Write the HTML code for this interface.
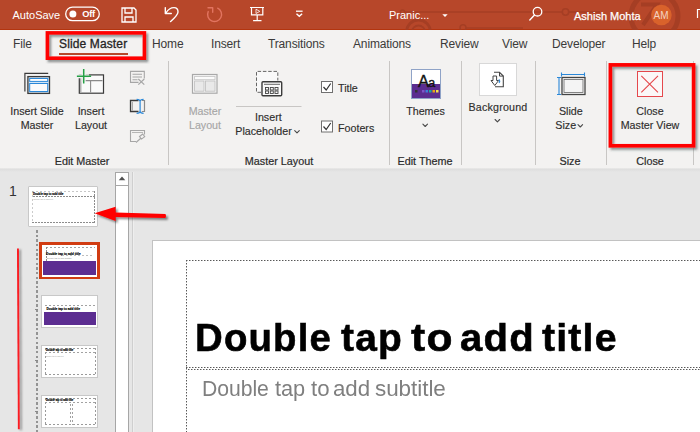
<!DOCTYPE html>
<html>
<head>
<meta charset="utf-8">
<title>Slide Master</title>
<style>
html,body{margin:0;padding:0;}
body{width:700px;height:432px;overflow:hidden;position:relative;background:#e6e6e6;font-family:"Liberation Sans",sans-serif;font-size:12px;color:#333;}
.abs{position:absolute;}
#titlebar{left:0;top:0;width:700px;height:30px;background:#b7472a;box-shadow:inset 0 -1px 0 #b3350f;}
#titlebar .t{position:absolute;z-index:2;color:#fff;font-size:11px;white-space:nowrap;line-height:14px;}
#tabs{left:0;top:30px;width:700px;height:29px;background:#f3f2f1;}
#tabs .t{position:absolute;top:7px;font-size:12px;letter-spacing:-0.15px;color:#3b3a39;white-space:nowrap;line-height:14px;}
#ribbon{left:0;top:59px;width:700px;height:110px;background:#f3f2f1;}
#ribbon .t{position:absolute;font-size:10.7px;letter-spacing:0;color:#2f2e2d;-webkit-text-stroke:0.150px #2f2e2d;white-space:nowrap;line-height:14px;text-align:center;transform:translateX(-50%);}
#ribbon .g{position:absolute;font-size:10.800px;color:#2b2b2b;-webkit-text-stroke:0.200px #2b2b2b;white-space:nowrap;line-height:14px;text-align:center;transform:translateX(-50%);top:95px;}
#ribbon .dis{color:#a6a6a6;-webkit-text-stroke:0.150px #a6a6a6;}
#ribbon .sep{position:absolute;top:2px;width:1px;height:104px;background:#c8c6c4;}
#shadow{left:0;top:168px;width:700px;height:4px;background:linear-gradient(#f3f2f1 0,#dddddd 22%,#e6e6e6 100%);z-index:1;}
#panel{left:0;top:169px;width:131px;height:263px;}
#main{left:131px;top:169px;width:569px;height:263px;}
.thumb{position:absolute;background:#fff;border:1px solid #c8c8c8;box-sizing:border-box;}
.tiny{font-size:3.2px;font-weight:bold;color:#000;-webkit-text-stroke:0.150px #000;white-space:nowrap;line-height:4px;}
.redbox{border:3px solid #f2050b;box-shadow:2px 2px 3px rgba(0,0,0,.55), inset 2px 2px 3px rgba(0,0,0,.45);}
.dot{box-sizing:border-box;}
.hd{height:1px;background:repeating-linear-gradient(to right,#585858 0,#585858 1px,#b0b0b0 1px,#b0b0b0 2px,transparent 2px,transparent 3px);}
.vd{width:1px;background:repeating-linear-gradient(to bottom,#585858 0,#585858 1px,#b0b0b0 1px,#b0b0b0 2px,transparent 2px,transparent 3px);}
.dh{height:1px;background:repeating-linear-gradient(to right,#a2a2a2 0,#a2a2a2 2px,transparent 2px,transparent 4px);}
.dv{width:1px;background:repeating-linear-gradient(to bottom,#a2a2a2 0,#a2a2a2 2px,transparent 2px,transparent 4px);}
.dbox{box-sizing:border-box;background:
 repeating-linear-gradient(to right,#9a9a9a 0,#9a9a9a 2px,transparent 2px,transparent 4px) top left/100% 1px no-repeat,
 repeating-linear-gradient(to right,#9a9a9a 0,#9a9a9a 2px,transparent 2px,transparent 4px) bottom left/100% 1px no-repeat,
 repeating-linear-gradient(to bottom,#9a9a9a 0,#9a9a9a 2px,transparent 2px,transparent 4px) top left/1px 100% no-repeat,
 repeating-linear-gradient(to bottom,#9a9a9a 0,#9a9a9a 2px,transparent 2px,transparent 4px) top right/1px 100% no-repeat;}
.dbox.nb{background:
 repeating-linear-gradient(to right,#9a9a9a 0,#9a9a9a 2px,transparent 2px,transparent 4px) top left/100% 1px no-repeat,
 repeating-linear-gradient(to bottom,#9a9a9a 0,#9a9a9a 2px,transparent 2px,transparent 4px) top left/1px 100% no-repeat,
 repeating-linear-gradient(to bottom,#9a9a9a 0,#9a9a9a 2px,transparent 2px,transparent 4px) top right/1px 100% no-repeat;}
.tw{top:75px;font-size:38px;font-weight:bold;-webkit-text-stroke:0.550px #000;letter-spacing:1.150px;line-height:44px;color:#000;white-space:nowrap;transform-origin:0 0;}
.sw{top:135.700px;font-size:21.500px;letter-spacing:-0.050px;line-height:24px;color:#7f7f7f;white-space:nowrap;transform-origin:0 0;}
.dh.dk{background:repeating-linear-gradient(to right,#8c8c8c 0,#8c8c8c 2px,transparent 2px,transparent 3px);}
.dv.dk{background:repeating-linear-gradient(to bottom,#8c8c8c 0,#8c8c8c 2px,transparent 2px,transparent 3px);}
</style>
</head>
<body>
<div id="titlebar" class="abs">
  <span class="t" style="left:12.500px;top:7.500px;">AutoSave</span>
  <svg class="abs" style="left:60px;top:0" width="50" height="30" viewBox="60 0 50 30">
    <rect x="65.700" y="7.100" width="33.600" height="13.600" rx="6.800" fill="none" stroke="#fff" stroke-width="1.300"/>
    <circle cx="72.900" cy="13.900" r="3.500" fill="#fff"/>
    <text x="82.300" y="17.100" font-family="Liberation Sans, sans-serif" font-size="9.300" font-weight="bold" fill="#fff" letter-spacing="-0.300">Off</text>
  </svg>
  <svg class="abs" style="left:119px;top:5px" width="20" height="20" viewBox="0 0 20 20" fill="none" stroke="#fff" stroke-width="1.3">
    <path d="M3 3h12l2 2v12H3z"/><path d="M6 3v5h7V3"/><path d="M6 17v-5h8v5"/>
  </svg>
  <svg class="abs" style="left:155px;top:0" width="80" height="30" viewBox="155 0 80 30" fill="none" stroke-linecap="round" stroke-linejoin="round">
    <path d="M165.300 7.600V13.500H171.300M165.900 13C168 9.500 171 7.600 174 7.600C176.500 7.600 178 9.500 178 12C178 15 174 18.500 170.500 21.600" stroke="#fff" stroke-width="1.400"/>
    <path d="M217.700 8.200A7 7 0 1 1 208.200 11.600M208 7.800H212.700V12.200" stroke="#e27460" stroke-width="1.400"/>
  </svg>
  <svg class="abs" style="left:240px;top:0" width="80" height="30" viewBox="240 0 80 30" fill="none" stroke="#fff" stroke-width="1.200">
    <path d="M250 7.500h14M251.500 7.500v7.400h11.300v-7.400M257.200 14.900v5.700M253.100 20.600h8.400"/><path d="M256 9.200v4.300l3.800-2.150z" stroke-width="0.800"/>
    <path d="M296 11.200h6.600" stroke-width="1.300"/><path d="M296.500 13.700l2.800 2.500l2.800-2.500" stroke-width="1.400"/>
  </svg>
  <span class="t" style="left:389px;top:8px;">Pranic...</span>
  <svg class="abs" style="left:440px;top:12px" width="10" height="8" viewBox="0 0 10 8"><path d="M2.300 2.300l2.700 2.800L7.700 2.300z" fill="#fff"/></svg>
  <svg class="abs" style="left:380px;top:0" width="320" height="30" viewBox="380 0 320 30" fill="none">
    <g stroke="#a33d23" stroke-width="1.600" opacity="0.850">
      <circle cx="402.500" cy="12" r="2"/><path d="M405 12H562"/><path d="M569 12H600"/><circle cx="565.500" cy="12" r="3.200"/>
      <circle cx="418.500" cy="32" r="12" stroke-width="3"/><circle cx="418.500" cy="32" r="6.500" stroke-width="2"/>
      <circle cx="463" cy="27.700" r="3"/><path d="M466 28H523"/>
      <circle cx="654.500" cy="16" r="23.500" stroke-width="5"/>
      <path d="M641 4.500H657L643 25" stroke-width="4"/>
    </g>
    <circle cx="537.500" cy="11.700" r="4.300" stroke="#fff" stroke-width="1.300"/><path d="M534.500 15L529.800 20" stroke="#fff" stroke-width="1.400" stroke-linecap="round"/>
    <circle cx="661.400" cy="15" r="10.300" fill="#d9622b" stroke="none"/>
    <path d="M700 9.500H697.500V18" stroke="#fff" stroke-width="1.200"/>
  </svg>
  <span class="t" style="left:574px;top:8.500px;-webkit-text-stroke:0.250px #fff;">Ashish Mohta</span>
  <span class="t" style="left:653.500px;top:8.700px;font-size:10px;color:#f3d3c2;">AM</span>
</div>

<div id="tabs" class="abs">
  <span class="t" style="left:13px;">File</span>
  <span class="t" style="left:59px;color:#252423;letter-spacing:0.130px;-webkit-text-stroke:0.300px #252423;">Slide Master</span>
  <div class="abs" style="left:59px;top:22.600px;width:69px;height:2.200px;background:#b7472a;"></div>
  <span class="t" style="left:152px;">Home</span>
  <span class="t" style="left:211px;">Insert</span>
  <span class="t" style="left:268px;">Transitions</span>
  <span class="t" style="left:353px;">Animations</span>
  <span class="t" style="left:440px;">Review</span>
  <span class="t" style="left:502px;">View</span>
  <span class="t" style="left:552px;">Developer</span>
  <span class="t" style="left:632px;">Help</span>
</div>

<div id="ribbon" class="abs">
  <!-- icons: coordinates are relative to ribbon top (y=59) -->
  <svg class="abs" style="left:0;top:0" width="700" height="110" viewBox="0 59 700 110" fill="none">
    <!-- insert slide master -->
    <path d="M24.900 91.600V73.400H48.200" stroke="#3a3a3a" stroke-width="1.200"/>
    <rect x="27.900" y="76.600" width="21.600" height="16.800" fill="#d4e6f6" stroke="#3a3a3a" stroke-width="1.300"/>
    <rect x="29.700" y="78.500" width="18" height="2.900" fill="#fff" stroke="#2b88d8" stroke-width="1"/>
    <rect x="29.700" y="83.500" width="18" height="8" fill="#fbfbfb" stroke="#2b88d8" stroke-width="1"/>
    <!-- insert layout -->
    <rect x="79.300" y="74.900" width="24.200" height="18.300" fill="#fafafa" stroke="#3a3a3a" stroke-width="1.200"/>
    <path d="M80.800 76V92" stroke="#a0a0a0" stroke-width="1.200"/>
    <path d="M82 80.600h20.500M90.600 80.600v12" stroke="#8a8a8a" stroke-width="1.100"/>
    <path d="M76 76.300h13M83.700 71v11" stroke="#f3f2f1" stroke-width="4"/>
    <path d="M76.900 76.300h14.200M83.700 69.100v14.300" stroke="#25a046" stroke-width="1.500"/>
    <!-- small icons -->
    <g stroke="#a6a6a6" stroke-width="1.100">
      <path d="M138.500 82.400h-8v-11h13.800v7"/><path d="M132.500 74.300h9.500M132.500 77h9.500M132.500 79.700h5"/><path d="M138.300 79l6 5.600M144.300 79l-6 5.600" stroke-width="1.200"/>
    </g>
    <path d="M138.500 100.500h-8v11h8" stroke="#3a3a3a" stroke-width="1.300"/>
    <path d="M132.300 102v8.500" stroke="#9a9a9a" stroke-width="1"/>
    <path d="M141.800 100.500h2.700v11h-2.700" stroke="#8a8a8a" stroke-width="1.200"/>
    <path d="M136.600 99.300c2.500 0 3.500 .600 3.500 2c0-1.400 1-2 3.500-2M136.600 113.300c2.500 0 3.500-.600 3.500-2c0 1.400 1 2 3.500 2M140.100 101v10.500" stroke="#2b88d8" stroke-width="1.200"/>
    <g stroke="#a6a6a6" stroke-width="1.100">
      <path d="M136 141.500h-5.500v-11h14v4"/><path d="M132 132.500h11" stroke-width="0.800"/><path d="M139.500 136.500l3.200-2.500l2 2.600l-3.200 2.500zM140.500 138.500l-4.500 4" />
    </g>
    <!-- master layout (disabled) -->
    <rect x="192.500" y="74.500" width="24.500" height="18.700" fill="#f7f7f7" stroke="#a9a9a9" stroke-width="1.200"/>
    <rect x="194.600" y="76.500" width="20.400" height="3.200" fill="#fbfbfb" stroke="#c4c4c4" stroke-width="0.800"/>
    <rect x="194.600" y="81" width="9.400" height="10.200" fill="#e9e9e9" stroke="#bdbdbd" stroke-width="0.800"/>
    <rect x="205.500" y="81" width="9.500" height="10.200" fill="#e9e9e9" stroke="#bdbdbd" stroke-width="0.800"/>
    <!-- insert placeholder -->
    <path d="M261 92.300H256.500V71.400H277.800V80.500" stroke="#666" stroke-width="1" stroke-dasharray="3.500 1.800" fill="#f9f9f9"/>
    <rect x="262" y="81.700" width="19.700" height="14" rx="1" fill="#fafafa" stroke="#3c3c3c" stroke-width="1.400"/>
    <path d="M264 84.300h16" stroke="#555" stroke-width="0.900"/>
    <g fill="none" stroke="#444" stroke-width="0.900"><rect x="265.500" y="87.500" width="3" height="2.500"/><rect x="270.300" y="87.500" width="3" height="2.500"/><rect x="275" y="87.500" width="3" height="2.500"/><rect x="265.500" y="91" width="3" height="2.500"/><rect x="270.300" y="91" width="3" height="2.500"/><rect x="275" y="91" width="3" height="2.500"/></g>
    <path d="M236 106.500h65.500" stroke="#c8c6c4" stroke-width="1"/>
    <!-- checkboxes -->
    <rect x="321.500" y="81.500" width="11" height="11" fill="#fff" stroke="#707070" stroke-width="1"/>
    <path d="M323.500 87l2.700 3l4.500-6.500" stroke="#333" stroke-width="1.200"/>
    <rect x="321.500" y="121" width="11" height="11" fill="#fff" stroke="#707070" stroke-width="1"/>
    <path d="M323.500 126.500l2.700 3l4.500-6.500" stroke="#333" stroke-width="1.200"/>
    <!-- themes -->
    <rect x="411.500" y="69.500" width="29" height="29" fill="#fff" stroke="#8fa3c7" stroke-width="1"/>
    <rect x="412" y="84" width="28" height="14" fill="#5b2d90"/>
    <text x="418" y="86.600" font-family="Liberation Sans, sans-serif" font-size="16.500" fill="#111" stroke="#111" stroke-width="0.350" letter-spacing="-0.800">A<tspan font-size="12.500">a</tspan></text>
    <rect x="415" y="90" width="2.500" height="2.500" fill="#333"/><rect x="422" y="90" width="2.500" height="2.500" fill="#7d55c7"/><rect x="425.500" y="90" width="2.500" height="2.500" fill="#3f7fd9"/><rect x="429" y="90" width="2.500" height="2.500" fill="#1aa89a"/><rect x="432.500" y="90" width="2.500" height="2.500" fill="#e8a317"/><rect x="436" y="90" width="2.500" height="2.500" fill="#f2e04b"/>
    <!-- background -->
    <rect x="479.500" y="63.500" width="37" height="32" fill="#fff" stroke="#d8d8d8" stroke-width="1"/>
    <path d="M494 72.300h5.500l3.800 3.800v10.700h-8.300" stroke="#444" stroke-width="1.100"/>
    <path d="M499.500 72.300v3.800h3.800" stroke="#444" stroke-width="1"/>
    <path d="M493 76v4.500h-2l3.800 5l3.800-5h-2v-4.500z" stroke="#444" stroke-width="1" fill="#fff"/>
    <path d="M498.800 79.500c1.200 1.400 1.200 2.600 0 3.300" stroke="#2b88d8" stroke-width="1.200"/>
    <!-- slide size -->
    <path d="M561 74.500h24M561.500 72.500v4M584.500 72.500v4" stroke="#2b88d8" stroke-width="1.100"/>
    <path d="M559 77v18M557 77.500h4M557 94.500h4" stroke="#2b88d8" stroke-width="1.100"/>
    <rect x="562" y="77.500" width="23" height="17" fill="#fafafa" stroke="#444" stroke-width="1.300"/>
    <rect x="564" y="79.500" width="19" height="13" fill="#f4f4f4" stroke="#666" stroke-width="0.800"/>
    <g stroke="#4a4a4a" stroke-width="1.100" stroke-linecap="round" stroke-linejoin="round">
      <path d="M294.700 130.600l2.300 2.300l2.300-2.300"/><path d="M422.900 124.200l2.300 2.300l2.300-2.300"/><path d="M495.100 119.500l2.300 2.300l2.300-2.300"/><path d="M578 124.700l2.300 2.300l2.300-2.300"/>
    </g>
    <!-- close master view -->
    <rect x="637.500" y="71.500" width="25" height="25" fill="#fbf8f8" stroke="#e5484c" stroke-width="1"/>
    <path d="M641.300 75.800l16.700 16.600M658 75.800l-16.700 16.600" stroke="#e5484c" stroke-width="1.100"/>
  </svg>
  <span class="t" style="left:37px;top:45px;">Insert Slide<br>Master</span>
  <span class="t" style="left:91px;top:45px;">Insert<br>Layout</span>
  <span class="g" style="left:82px;">Edit Master</span>
  <div class="sep" style="left:168px;"></div>
  <span class="t dis" style="left:205px;top:45px;">Master<br>Layout</span>
  <span class="t" style="left:268.300px;top:51px;">Insert</span><span class="t" style="left:263.500px;top:65px;">Placeholder</span>
  <span class="t" style="left:338px;top:22px;transform:none;">Title</span>
  <span class="t" style="left:338px;top:61.5px;transform:none;">Footers</span>
  <span class="g" style="left:279px;">Master Layout</span>
  <div class="sep" style="left:389px;"></div>
  <span class="t" style="left:425.500px;top:44.500px;">Themes</span>
  <span class="g" style="left:425px;">Edit Theme</span>
  <div class="sep" style="left:461px;"></div>
  <span class="t" style="left:498px;top:40.500px;letter-spacing:0.200px;">Background</span>
  <div class="sep" style="left:535px;"></div>
  <span class="t" style="left:570.800px;top:44.500px;">Slide</span><span class="t" style="left:565.700px;top:59px;">Size</span>
  <span class="g" style="left:570px;">Size</span>
  <div class="sep" style="left:606px;"></div>
  <div class="sep" style="left:693px;"></div>
  <span class="t" style="left:650px;top:44.700px;">Close<br>Master View</span>
  <span class="g" style="left:650px;">Close</span>
</div>

<div id="shadow" class="abs"></div>
<div id="panel" class="abs">
  <span class="abs" style="left:9px;top:14px;font-size:14px;line-height:16px;color:#333;">1</span>
  <!-- master thumb -->
  <div class="thumb" style="left:28px;top:17px;width:70px;height:41px;border-radius:1px;">
    <div class="abs dh" style="left:3px;top:4px;width:63px;opacity:.6;"></div>
    <div class="abs dv" style="left:2.500px;top:4px;height:31px;opacity:.55;"></div>
    <div class="abs dv dk" style="left:65px;top:4px;height:32px;"></div>
    <div class="abs dh dk" style="left:3px;top:35px;width:63px;"></div>
    <div class="abs dh dk" style="left:4px;top:9px;width:62px;"></div>
    <span class="abs tiny" style="left:4px;top:4.600px;font-size:2.900px;">Double tap to add title</span>
    <span class="abs tiny" style="left:4.500px;top:9.600px;font-size:2px;font-weight:normal;color:#999;-webkit-text-stroke:0;">Double tap to add text</span>
  </div>
  <!-- dotted connector -->
  <div class="abs" style="left:35.800px;top:61px;width:2px;height:202px;background:repeating-linear-gradient(to bottom,#949494 0,#949494 2.500px,transparent 2.500px,transparent 4.650px);"></div>
  <div class="abs" style="left:35px;top:139.500px;width:3px;height:1px;background:#888;"></div>
  <div class="abs" style="left:35px;top:191px;width:3px;height:1px;background:#888;"></div>
  <div class="abs" style="left:35px;top:241.500px;width:3px;height:1px;background:#888;"></div>
  <!-- selected layout thumb -->
  <div class="abs" style="left:39.300px;top:73px;width:60.500px;height:37.200px;background:#d13c12;"></div>
  <div class="abs" style="left:42px;top:75.600px;width:55.200px;height:32px;background:#fff;">
    <div class="abs dh" style="left:3.500px;top:2.500px;width:49px;"></div>
    <div class="abs dv" style="left:3.500px;top:2.500px;height:14px;background:repeating-linear-gradient(to bottom,#8c8c8c 0,#8c8c8c 2px,transparent 2px,transparent 3px);"></div>
    <span class="abs tiny" style="left:4px;top:7.600px;font-size:3.300px;line-height:5px;">Double tap to add title</span>
    <div class="abs dh" style="left:20px;top:10.800px;width:32px;opacity:.7;"></div>
    <span class="abs tiny" style="left:5px;top:11.800px;font-size:2.200px;font-weight:normal;color:#888;-webkit-text-stroke:0;">Double tap to add subtitle</span>
    <div class="abs" style="left:1.300px;top:16.300px;width:52.700px;height:14.100px;background:#5c2d91;"></div>
  </div>
  <!-- layout 3 -->
  <div class="thumb" style="left:41px;top:125.500px;width:57px;height:33px;">
    <div class="abs dh" style="left:3px;top:9.500px;width:50px;"></div>
    <span class="abs tiny" style="left:4.500px;top:11.500px;font-size:3.200px;">Double tap to add title</span>
    <div class="abs" style="left:1.500px;top:16.300px;width:52.700px;height:13.500px;background:#5c2d91;"></div>
  </div>
  <!-- layout 4 -->
  <div class="thumb" style="left:41px;top:175.500px;width:57px;height:33px;">
    <div class="abs dbox" style="left:2.500px;top:2.500px;width:51px;height:27px;"></div>
    <span class="abs tiny" style="left:4px;top:3.300px;font-size:2.600px;">Double tap to add title</span>
    <div class="abs dh" style="left:3px;top:6.500px;width:50px;"></div>
    <span class="abs tiny" style="left:4px;top:8px;font-size:1.800px;font-weight:normal;color:#999;-webkit-text-stroke:0;">Double tap to add text</span>
  </div>
  <!-- layout 5 -->
  <div class="thumb" style="left:41px;top:225.500px;width:57px;height:33px;">
    <div class="abs dbox" style="left:2.500px;top:2.500px;width:51px;height:27px;"></div>
    <span class="abs tiny" style="left:4px;top:3.300px;font-size:2.600px;">Double tap to add title</span>
    <div class="abs dh" style="left:3px;top:6.500px;width:50px;"></div>
    <div class="abs dv" style="left:28px;top:8px;height:21px;"></div>
    <div class="abs dv" style="left:30px;top:8px;height:21px;"></div>
  </div>
  <!-- scrollbar -->
  <div class="abs" style="left:115px;top:3px;width:14px;height:261px;background:#fff;border:1px solid #a6a6a6;box-sizing:border-box;"></div>
  <div class="abs" style="left:115px;top:16px;width:14px;height:1px;background:#a6a6a6;"></div>
  <svg class="abs" style="left:118px;top:7px" width="8" height="5" viewBox="0 0 8 5"><path d="M0.700 4.300L4 0.600L7.300 4.300z" fill="#505050"/></svg>
  <!-- red vertical line -->
  <svg class="abs" style="left:10px;top:75px" width="20" height="190" viewBox="10 244 20 190">
    <path d="M17 248.600L18.900 248.600L19.800 429.200L17.900 429.200z" fill="#fb1a20" filter="url(#sh2)"/>
    <defs><filter id="sh2" x="-200%" y="-5%" width="500%" height="110%"><feDropShadow dx="2" dy="1" stdDeviation="1.100" flood-color="#000" flood-opacity="0.400"/></filter></defs>
  </svg>
</div>
<div class="abs" style="left:132px;top:172px;width:1px;height:260px;background:#cfcfcf;border-right:1px solid #eeeeee;"></div>
<div id="main" class="abs">
  <div class="abs" id="slide" style="left:21px;top:71px;width:560px;height:200px;background:#fff;border-left:1px solid #c2c2c2;border-top:1px solid #c2c2c2;">
    <div class="abs hd" style="left:33px;top:19px;width:530px;"></div>
    <div class="abs vd" style="left:33px;top:19px;height:180px;"></div>
    <div class="abs hd" style="left:33px;top:126px;width:530px;"></div>
    <div class="abs hd" style="left:34.500px;top:128px;width:530px;"></div>
    <span class="abs tw" id="w0" style="left:42.0px;transform:scaleX(1.01);">Double</span>
    <span class="abs tw" id="w1" style="left:188.4px;transform:scaleX(1.024);">tap</span>
    <span class="abs tw" id="w2" style="left:257.8px;transform:scaleX(1.12);">to</span>
    <span class="abs tw" id="w3" style="left:306.6px;transform:scaleX(1.055);">add</span>
    <span class="abs tw" id="w4" style="left:389.2px;transform:scaleX(1.032);">title</span>
    <span class="abs sw" id="s0" style="left:49.3px;transform:scaleX(0.985);">Double</span>
    <span class="abs sw" id="s1" style="left:121.7px;transform:scaleX(1.014);">tap</span>
    <span class="abs sw" id="s2" style="left:157.7px;transform:scaleX(1.035);">to</span>
    <span class="abs sw" id="s3" style="left:180.3px;transform:scaleX(1.036);">add</span>
    <span class="abs sw" id="s4" style="left:221.5px;transform:scaleX(1.045);">subtitle</span>
  </div>
</div>
<!-- annotations -->
<svg class="abs" style="left:0;top:0" width="700" height="180" viewBox="0 0 700 180">
  <defs><filter id="bs" x="-10%" y="-10%" width="125%" height="130%"><feDropShadow dx="2" dy="2.200" stdDeviation="1.100" flood-color="#2e3c3c" flood-opacity="0.520"/></filter></defs>
  <rect x="47.400" y="32.900" width="97" height="25.300" fill="none" stroke="#ff0000" stroke-width="3.600" filter="url(#bs)"/>
  <rect x="610.400" y="64.900" width="83.200" height="80.900" fill="none" stroke="#ff0000" stroke-width="3.700" filter="url(#bs)"/>
</svg>
<svg class="abs" style="left:90px;top:200px" width="85" height="30" viewBox="90 200 85 30">
  <defs><filter id="sh" x="-10%" y="-30%" width="120%" height="180%"><feDropShadow dx="2" dy="2" stdDeviation="1.100" flood-color="#000" flood-opacity="0.450"/></filter></defs>
  <path d="M94.600 213.300L115.600 206.800V212.400L165.500 214Q166.600 216 165.500 218.100L115.600 216.900V221z" fill="#ff0000" filter="url(#sh)"/>
</svg>
</body>
</html>
